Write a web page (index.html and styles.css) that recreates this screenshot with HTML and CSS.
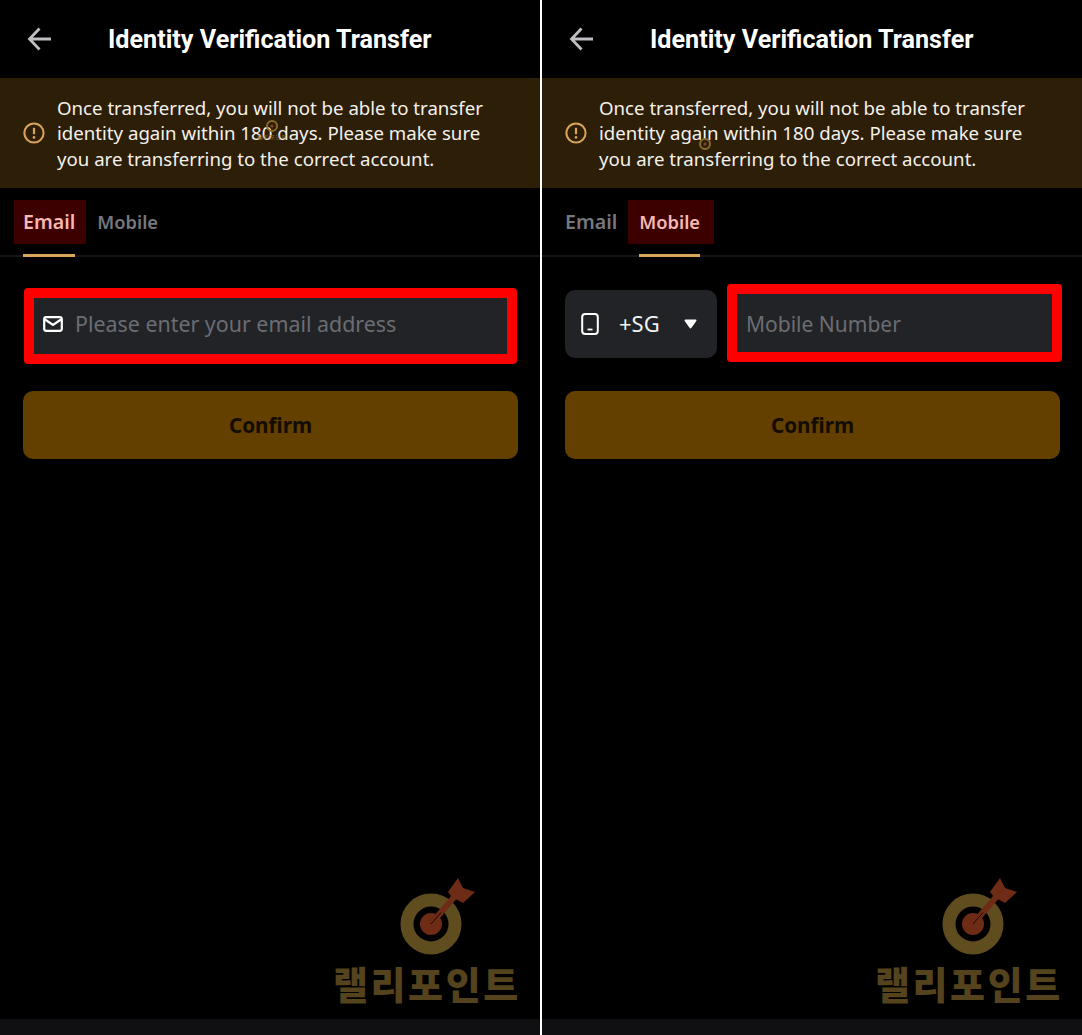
FILE: index.html
```html
<!DOCTYPE html>
<html lang="en">
  <head>
    <meta charset="UTF-8">
    <meta name="viewport" content="width=device-width, initial-scale=1">
    <title>Identity Verification Transfer</title>
    <link rel="stylesheet" href="styles.css">
  </head>
  <body>
    <div class="wrapper">
      <div class="phone">
        <div class="top-bar">
          <svg class="back" width="24" height="24" viewBox="0 0 24 24"><path d="M24 12H3M12.5 1.5L2.5 12l10 10.5" fill="none" stroke="#bcbec2" stroke-width="2.8"/></svg>
          <h1>Identity Verification Transfer</h1>
        </div>
        <div class="notice">
          <svg class="notice-icon" width="22" height="22" viewBox="0 0 22 22"><circle cx="11" cy="11" r="9.6" fill="none" stroke="#d9a35c" stroke-width="2"/><path d="M11 5.8v6.4" stroke="#d9a35c" stroke-width="2.2"/><circle cx="11" cy="15.4" r="1.3" fill="#d9a35c"/></svg>
          <p>Once transferred, you will not be able to transfer<br>identity again within 180 days. Please make sure<br>you are transferring to the correct account.</p>
          <div class="mini-mark mini-left">
            <svg width="14" height="14" viewBox="0 0 14 14"><circle cx="7" cy="7" r="5" fill="none" stroke="#8a6a28" stroke-width="2"/><circle cx="7" cy="7" r="1.6" fill="#8a4220"/></svg>
            <span>랠리포인트</span>
          </div>
        </div>
        <div class="tabs">
          <div class="tab tab-email tab-on"><span class="tab-label">Email</span></div>
          <div class="tab tab-mobile"><span class="tab-label">Mobile</span></div>
        </div>
        <div class="form">
          <div class="field field-marked">
            <svg class="mail" width="20" height="16" viewBox="0 0 20 16"><rect x="1.2" y="1.2" width="17.6" height="13.6" rx="2" fill="none" stroke="#fff" stroke-width="2.2"/><path d="M2 3.5l8 5.5 8-5.5" fill="none" stroke="#fff" stroke-width="2.2"/></svg>
            <span class="hint">Please enter your email address</span>
          </div>
          <button class="confirm">Confirm</button>
        </div>
        <div class="watermark">
          <svg width="82" height="80" viewBox="0 0 82 80"><circle cx="34" cy="48" r="24" fill="none" stroke="#5f4d20" stroke-width="13"/><circle cx="34" cy="48" r="11" fill="#6e2c17"/><path d="M34 48L58 20" stroke="#6e2c17" stroke-width="6"/><path d="M34 48L44 36.500" stroke="#1c0a05" stroke-width="1"/><path d="M61 2l5 10 12 4-12 11-11-6-4-5z" fill="#6e2c17"/></svg>
          <span>랠리포인트</span>
        </div>
        <div class="bottom-strip"></div>
      </div>
      <div class="phone">
        <div class="top-bar">
          <svg class="back" width="24" height="24" viewBox="0 0 24 24"><path d="M24 12H3M12.5 1.5L2.5 12l10 10.5" fill="none" stroke="#bcbec2" stroke-width="2.8"/></svg>
          <h1>Identity Verification Transfer</h1>
        </div>
        <div class="notice">
          <svg class="notice-icon" width="22" height="22" viewBox="0 0 22 22"><circle cx="11" cy="11" r="9.6" fill="none" stroke="#d9a35c" stroke-width="2"/><path d="M11 5.8v6.4" stroke="#d9a35c" stroke-width="2.2"/><circle cx="11" cy="15.4" r="1.3" fill="#d9a35c"/></svg>
          <p>Once transferred, you will not be able to transfer<br>identity again within 180 days. Please make sure<br>you are transferring to the correct account.</p>
          <div class="mini-mark mini-right">
            <svg width="14" height="14" viewBox="0 0 14 14"><circle cx="7" cy="7" r="5" fill="none" stroke="#8a6a28" stroke-width="2"/><circle cx="7" cy="7" r="1.6" fill="#8a4220"/></svg>
          </div>
        </div>
        <div class="tabs">
          <div class="tab tab-email"><span class="tab-label">Email</span></div>
          <div class="tab tab-mobile tab-on"><span class="tab-label">Mobile</span></div>
        </div>
        <div class="form">
          <div class="mobile-row">
            <div class="field country">
              <svg width="18" height="24" viewBox="0 0 18 24"><rect x="1.2" y="2" width="15.600" height="20" rx="3" fill="none" stroke="#fff" stroke-width="2"/><path d="M6.500 17.500h5" stroke="#fff" stroke-width="1.800"/></svg>
              <span class="code">+SG</span>
              <svg class="caret" width="13" height="10" viewBox="0 0 13 10"><path d="M1.500 1.500h10L6.500 8.500z" fill="#fff" stroke="#fff" stroke-width="2" stroke-linejoin="round"/></svg>
            </div>
            <div class="field field-marked phone-field">
              <span class="hint">Mobile Number</span>
            </div>
          </div>
          <button class="confirm">Confirm</button>
        </div>
        <div class="watermark">
          <svg width="82" height="80" viewBox="0 0 82 80"><circle cx="34" cy="48" r="24" fill="none" stroke="#5f4d20" stroke-width="13"/><circle cx="34" cy="48" r="11" fill="#6e2c17"/><path d="M34 48L58 20" stroke="#6e2c17" stroke-width="6"/><path d="M34 48L44 36.500" stroke="#1c0a05" stroke-width="1"/><path d="M61 2l5 10 12 4-12 11-11-6-4-5z" fill="#6e2c17"/></svg>
          <span>랠리포인트</span>
        </div>
        <div class="bottom-strip"></div>
      </div>
    </div>
  </body>
</html>
```

FILE: styles.css
```css
html, body {
  margin: 0;
  background-color: #000000;
}
body {
  font-family: 'Noto Sans', sans-serif;
  color: #ffffff;
}
.wrapper {
  display: flex;
  justify-content: space-between;
  width: 1082px;
  height: 1035px;
  background-color: #ffffff;
}
.phone {
  position: relative;
  display: flex;
  flex-direction: column;
  width: 540px;
  height: 1035px;
  background-color: #000000;
  overflow: hidden;
}
.top-bar {
  display: flex;
  align-items: center;
  height: 78px;
  padding-left: 27px;
}
.back {
  flex: none;
}
.top-bar h1 {
  margin: 2px 0 0 57px;
  font-family: 'Roboto', sans-serif;
  font-size: 25.15px;
  font-weight: 700;
  line-height: 1;
}
.notice {
  position: relative;
  display: flex;
  align-items: center;
  height: 110px;
  padding-left: 23px;
  background-color: #2c1e07;
}
.notice-icon {
  flex: none;
}
.notice p {
  margin: 0 0 0 12px;
  font-size: 18.65px;
  line-height: 25.5px;
  color: #f4f1ea;
  white-space: nowrap;
}
.mini-mark {
  position: absolute;
  display: flex;
  flex-direction: column;
  align-items: center;
  font-size: 6px;
  line-height: 8px;
  color: #8a6a28;
}
.mini-left {
  left: 257px;
  top: 41px;
}
.mini-right {
  left: 156px;
  top: 59px;
}
.tabs {
  display: flex;
  box-sizing: border-box;
  height: 69px;
  padding-left: 14px;
  border-bottom: 2px solid #141414;
}
.tab {
  position: relative;
  display: flex;
  align-items: center;
  height: 43px;
  margin-top: 12px;
  padding-bottom: 1px;
  font-weight: 600;
  color: #76787d;
}
.tab-email {
  padding-left: 9px;
  padding-right: 11px;
  font-size: 19.6px;
}
.tab-mobile {
  padding-left: 11px;
  padding-right: 14px;
  font-size: 18.3px;
}
.tab-on {
  background-color: #3c0000;
  color: #f6b9b2;
}
.tab-on::after {
  content: "";
  position: absolute;
  bottom: -13px;
  height: 3px;
  background-color: #d9a65c;
}
.tab-email.tab-on::after {
  left: 9px;
  right: 11px;
}
.tab-mobile.tab-on::after {
  left: 11px;
  right: 14px;
}
.form {
  display: flex;
  flex-direction: column;
  padding: 33px 22px 0 23px;
}
.field {
  display: flex;
  align-items: center;
  box-sizing: border-box;
  height: 68px;
  background-color: #212327;
  border-radius: 10px;
}
.field-marked {
  height: 76px;
  margin: -2px 1px -6px 1px;
  padding: 0 0 5px 9px;
  border: 10px solid #fe0000;
  border-radius: 4px;
}
.mail {
  flex: none;
}
.hint {
  margin-left: 12px;
  font-size: 21.4px;
  color: #6b6d72;
}
.mobile-row {
  display: flex;
  gap: 10px;
  height: 68px;
}
.country {
  flex: none;
  width: 152px;
  gap: 20px;
  padding: 0 20px 0 16px;
}
.code {
  margin-top: -2px;
  font-size: 22px;
  color: #f2f2f2;
}
.caret {
  margin-left: auto;
}
.phone-field {
  flex: 1;
  height: 78px;
  margin: -6px -2px 0 0;
  padding: 2px 0 0 0;
}
.phone-field .hint {
  margin-left: 9px;
  font-size: 21px;
}
.confirm {
  height: 68px;
  margin-top: 33px;
  border: 0px solid #000000;
  border-radius: 10px;
  background-color: #634000;
  color: #120c02;
  font-family: 'Noto Sans', sans-serif;
  font-size: 20.7px;
  font-weight: 700;
}
.watermark {
  position: absolute;
  left: 333px;
  top: 876px;
  display: flex;
  flex-direction: column;
  align-items: flex-start;
}
.watermark svg {
  margin-left: 64px;
}
.watermark span {
  margin-top: 4px;
  font-family: 'Noto Sans CJK KR', sans-serif;
  font-size: 38px;
  font-weight: 900;
  line-height: 46px;
  letter-spacing: 2.6px;
  white-space: nowrap;
  color: #54431d;
}
.bottom-strip {
  position: absolute;
  left: 0;
  right: 0;
  bottom: 0;
  height: 16px;
  background-color: #101012;
}
```
